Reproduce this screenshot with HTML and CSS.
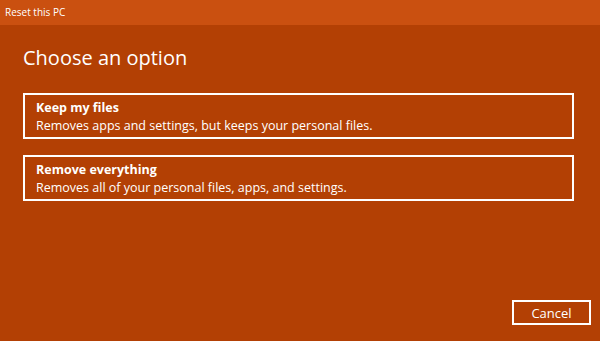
FILE: index.html
```html
<!DOCTYPE html>
<html lang="en">
<head>
    <meta charset="UTF-8">
    <meta name="viewport" content="width=device-width, initial-scale=1.0">
    <title>Reset this PC</title>
    <link rel="stylesheet" href="styles.css">
</head>
<body>
    <div class="titlebar">Reset this PC</div>
    <div class="content">
        <h1>Choose an option</h1>
        <div class="option">
            <div class="option-title">Keep my files</div>
            <div class="option-desc">Removes apps and settings, but keeps your personal files.</div>
        </div>
        <div class="option">
            <div class="option-title">Remove everything</div>
            <div class="option-desc">Removes all of your personal files, apps, and settings.</div>
        </div>
    </div>
    <div class="footer">
        <button class="cancel-button">Cancel</button>
    </div>
</body>
</html>
```

FILE: styles.css
```css
body {
    margin: 0;
    width: 600px;
    height: 341px;
    display: flex;
    flex-direction: column;
    background-color: #b34004;
    font-family: "Open Sans", "Noto Sans", sans-serif;
    color: white;
    overflow: hidden;
}
.titlebar {
    height: 25px;
    line-height: 25px;
    padding-left: 5px;
    font-size: 10px;
    background-color: #ca5010;
}
.content {
    flex: 1;
    padding: 0 26px 0 23px;
}
h1 {
    font-size: 20px;
    font-weight: normal;
    line-height: 28px;
    margin: 19px 0 21px 0;
}
.option {
    border: 2px solid white;
    padding: 4px 11px 2px 11px;
    margin-bottom: 16px;
}
.option-title {
    font-size: 12.5px;
    font-weight: bold;
    line-height: 18px;
}
.option-desc {
    font-size: 12.5px;
    line-height: 18px;
}
.footer {
    display: flex;
    justify-content: flex-end;
    padding: 0 9px 16px 0;
}
.cancel-button {
    width: 79px;
    height: 25px;
    background: transparent;
    border: 2px solid white;
    color: white;
    font-family: inherit;
    font-size: 13px;
    padding: 0;
}
```
